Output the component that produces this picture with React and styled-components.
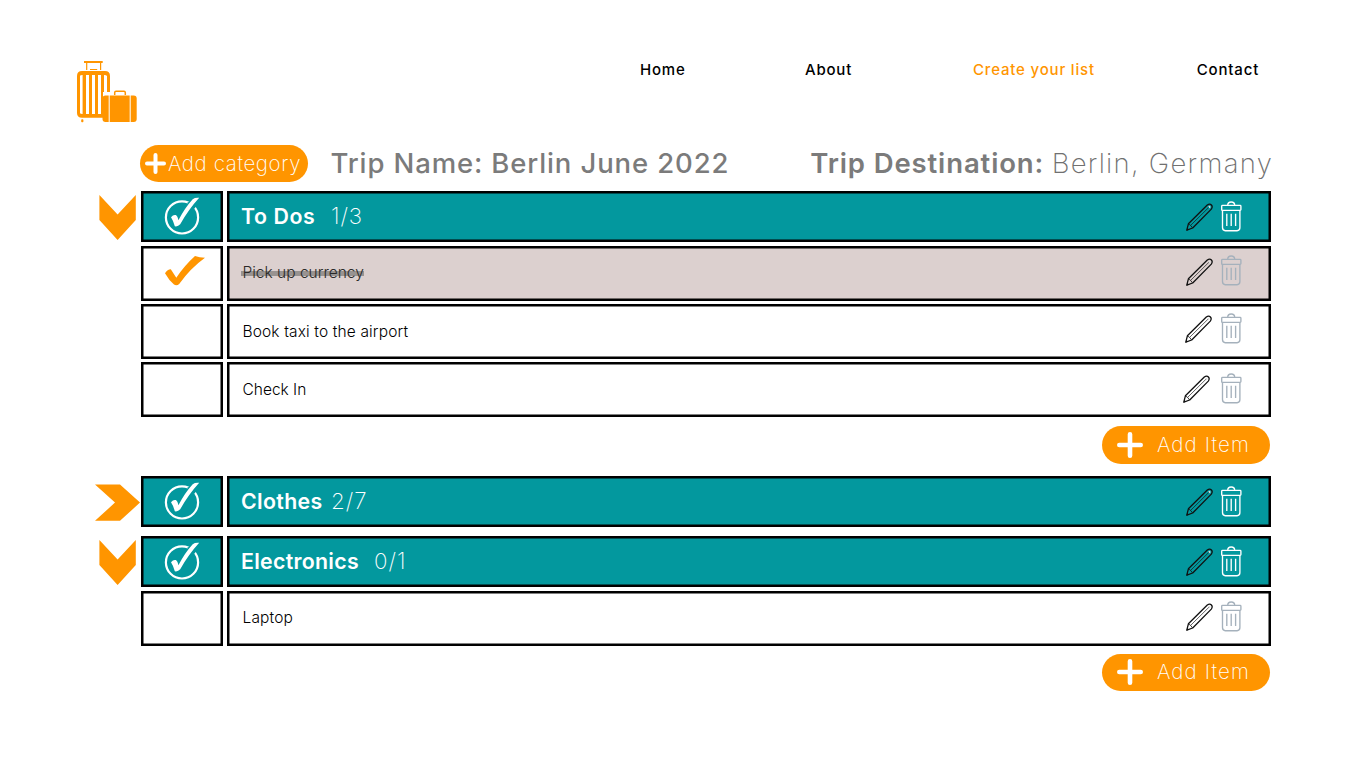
import React from 'react';
import styled, { createGlobalStyle } from 'styled-components';

const ORANGE = '#ff9500';
const TEAL = '#03989e';

const GlobalStyle = createGlobalStyle`
  * { box-sizing: border-box; }
  body { margin: 0; background: #fff; font-family: Inter, "Liberation Sans", sans-serif; }
`;

const Page = styled.div`
  width: 1366px;
  height: 768px;
  overflow: hidden;
  background: #fff;
`;

const Header = styled.header`
  display: flex;
  align-items: flex-start;
  height: 145px;
  padding: 60px 0 0 76px;
`;

const Nav = styled.nav`
  display: flex;
  margin-left: 502px;
`;

const NavLink = styled.a`
  width: ${p => p.$w}px;
  font-size: 15px;
  line-height: 20px;
  font-weight: 500;
  letter-spacing: ${p => p.$ls}px;
  white-space: nowrap;
  color: ${p => (p.$active ? ORANGE : '#000')};
`;

const TitleBar = styled.div`
  display: flex;
  align-items: center;
  height: 37px;
  margin-left: 139.5px;
`;

const Pill = styled.button`
  display: flex;
  align-items: center;
  gap: ${p => p.$gap}px;
  width: 168.5px;
  height: 37.4px;
  padding: 0 0 0 ${p => p.$pad}px;
  border: 0;
  border-radius: 19px;
  background: ${ORANGE};
  color: #fff;
  font-family: inherit;
  font-size: 20.5px;
  line-height: 36px;
  font-weight: 250;
  letter-spacing: ${p => p.$ls}px;
  white-space: nowrap;
`;

const TripText = styled.div`
  width: ${p => p.$w}px;
  margin-left: ${p => p.$ml}px;
  font-size: 27.5px;
  line-height: 37px;
  font-weight: ${p => p.$weight};
  letter-spacing: ${p => p.$ls}px;
  white-space: nowrap;
  color: ${p => (p.$weight < 300 ? '#707070' : '#7b7b7b')};
`;

const Category = styled.section`
  margin-top: ${p => p.$mt}px;
`;

const Row = styled.div`
  display: flex;
  gap: 3.5px;
  height: ${p => p.$h}px;
  margin-top: ${p => p.$mt}px;
`;

const Toggle = styled.div`
  display: flex;
  justify-content: flex-end;
  width: 140.5px;
  margin-right: -3.5px;
  padding: ${p => (p.$open ? '4px 4.5px 0 0' : '8px 1px 0 0')};
`;

const Box = styled.div`
  display: flex;
  align-items: center;
  background: ${p => p.$bg};
  box-shadow: inset 0 0 0 2.5px #000;
`;

const CheckCell = styled(Box)`
  justify-content: center;
  width: 82.5px;
  padding-bottom: ${p => p.$lift}px;
`;

const Body = styled(Box)`
  width: 1044.5px;
  padding-left: 14.5px;
`;

const CategoryName = styled.span`
  width: ${p => p.$w}px;
  padding-bottom: 1.6px;
  color: #fff;
  font-size: 21.3px;
  line-height: 30px;
  font-weight: 600;
  letter-spacing: ${p => p.$ls}px;
  white-space: nowrap;
`;

const Count = styled.span`
  padding-bottom: 1.6px;
  color: #fff;
  font-size: 22.3px;
  line-height: 30px;
  font-weight: 250;
  letter-spacing: ${p => p.$ls}px;
`;

const ItemName = styled.span`
  padding-left: 1.5px;
  padding-top: ${p => p.$drop || 0}px;
  color: ${p => (p.$done ? '#2a2928' : '#000')};
  font-size: 15.5px;
  line-height: 20px;
  font-weight: 300;
  letter-spacing: ${p => p.$ls}px;
  white-space: nowrap;
  ${p => p.$done && `
    background: linear-gradient(#989391, #989391) 0 8px / 100% 5px no-repeat;
  `}
`;

const Actions = styled.span`
  display: flex;
  align-items: center;
  gap: ${p => 7 + p.$shift}px;
  margin-left: auto;
  padding: 0 29.5px ${p => p.$lift}px 0;
`;

const AddRow = styled.div`
  display: flex;
  padding-left: 1101.5px;
  margin-top: ${p => p.$mt}px;
`;

const Logo = () => (
  <svg width="62" height="64" viewBox="76 60 62 64" fill={ORANGE}>
    <rect x="84" y="61" width="18.7" height="2" />
    <path d="M86.7 63v7M100.6 63v7" stroke={ORANGE} strokeWidth="1.2" />
    <rect x="90" y="69" width="7.2" height="1" />
    <path fillRule="evenodd" d="M82 71H105Q110 71 110 76V92H103V117.8H82Q77 117.8 77 113V76Q77 71 82 71ZM80 76V113Q80 114 82.6 114V75Q80 75 80 76ZM86 75V114H89V75ZM92 75V114H95V75ZM98 75V114H101V75ZM104 75V92H107V76Q106.5 75 104 75Z" />
    <rect x="81.2" y="119.2" width="2.2" height="3" rx=".8" />
    <path d="M114.7 95V92.7Q114.7 91.3 116 91.3H124Q125.3 91.3 125.3 92.7V95" fill="none" stroke={ORANGE} strokeWidth="1.5" />
    <rect x="102.5" y="95.4" width="34.2" height="26.7" rx="3" />
    <path d="M109.2 95V123M130.2 95V123" stroke="#fff" strokeWidth="1" />
  </svg>
);

const Plus = ({ size, thick }) => (
  <svg width={size} height={size} viewBox={`0 0 ${size} ${size}`}>
    <path
      d={`M${size / 2} ${thick / 2}V${size - thick / 2}M${thick / 2} ${size / 2}H${size - thick / 2}`}
      stroke="#fff" strokeWidth={thick} strokeLinecap="round"
    />
  </svg>
);

const Chevron = ({ open }) => open ? (
  <svg width="37" height="45" viewBox="0 0 37 45">
    <path d="M.4 0L18.6 19.5L36.8 0V25L18.6 45L.4 25Z" fill={ORANGE} />
  </svg>
) : (
  <svg width="45" height="37" viewBox="0 0 45 37">
    <path d="M0 .4H25L45 18.6L25 36.8H0L20 18.6Z" fill={ORANGE} />
  </svg>
);

const CircleCheck = () => (
  <svg width="36" height="38" viewBox="0 0 36 38">
    <circle cx="18" cy="20.4" r="16.1" fill="none" stroke="#fff" strokeWidth="2.2" />
    <path d="M23 6L31 1L36 5L30 12Z" fill={TEAL} />
    <path d="M7 20.3Q9.5 17.2 11.8 18.1Q13.6 19 14.4 23.3Q20.5 11.2 28.7 2.2Q31 0.4 35.2 0.8Q24.5 12.5 16.2 27.3Q13.8 30 10.8 29.3Q9.2 23.5 7 20.3Z" fill="#fff" />
  </svg>
);

const TickIcon = styled.svg`
  margin-left: 6px;
`;

const Tick = () => (
  <TickIcon width="40" height="30" viewBox="0 0 40 30">
    <path d="M0 17.2Q2.5 13.3 5.8 13.2L11.3 21.7Q19.5 9.5 30 0Q34.5 1.7 40 1.8Q25.5 12.2 14.2 28Q11.7 30 9 28.6Q3.8 24 0 17.2Z" fill={ORANGE} />
  </TickIcon>
);

const PencilIcon = styled.svg`
  position: relative;
  top: ${p => p.$dy}px;
`;

const Pencil = ({ tone, dy = 0 }) => (
  <PencilIcon $dy={dy} width="27" height="28" viewBox="0 0 27 28">
    <path d="M.8 27.2L2.4 20.8L21.3 2Q23.8 .3 25.4 2Q27 3.8 25.3 6.1L6.7 25Z" fill={tone} stroke="#111" strokeWidth="1.3" strokeLinejoin="round" />
    <path d="M2.4 20.8L4.6 22.4L6.7 25" fill="none" stroke="#111" strokeWidth=".8" />
    <path d="M4.6 22.4L23.3 3.9" fill="none" stroke="#111" strokeOpacity=".65" strokeWidth="1" />
    <path d="M.6 27.4L1.2 24.9L3.1 26.7Z" fill="#111" />
    <path d="M22.8 3.2L24.2 4.6" stroke="#ddd" strokeWidth="1.6" />
  </PencilIcon>
);

const Trash = ({ color }) => (
  <svg width="21" height="31" viewBox="0.3 0 21 31" fill="none" stroke={color} strokeWidth="1.35">
    <path d="M7 4.4Q7 1 10.5 1T14 4.4" />
    <rect x="1" y="4.4" width="19.2" height="5" rx=".8" />
    <path d="M1.8 9.4V26.6Q1.8 29.7 4.6 29.7H16.4Q19.2 29.7 19.2 26.6V9.4M6.1 12.8V25M10.5 12.8V25M14.9 12.8V25" />
  </svg>
);

const CategoryRow = ({ open, name, w, ls, count, countLs }) => (
  <Row $h={51.2} $mt={0}>
    <Toggle $open={open}><Chevron open={open} /></Toggle>
    <CheckCell $bg={TEAL} $lift={1.2}><CircleCheck /></CheckCell>
    <Body $bg={TEAL}>
      <CategoryName $w={w} $ls={ls}>{name}</CategoryName>
      <Count $ls={countLs}>{count}</Count>
      <Actions $shift={0.5} $lift={0}><Pencil tone={TEAL} dy={0.5} /><Trash color="#fff" /></Actions>
    </Body>
  </Row>
);

const ItemRow = ({ done, name, ls, mt = 3.4, shift = 0.5, lift = 4, dy = 0.5, drop }) => (
  <Row $h={55} $mt={mt}>
    <Toggle />
    <CheckCell $bg="#fff" $lift={4}>{done && <Tick />}</CheckCell>
    <Body $bg={done ? '#dcd0cf' : '#fff'}>
      <ItemName $done={done} $ls={ls} $drop={drop}>{name}</ItemName>
      <Actions $shift={shift} $lift={lift}>
        <Pencil tone={done ? '#dcd0cf' : '#fff'} dy={dy} />
        <Trash color="#a5b1bc" />
      </Actions>
    </Body>
  </Row>
);

const AddItem = ({ mt }) => (
  <AddRow $mt={mt}>
    <Pill $gap={14} $pad={15.5} $ls={1.12}><Plus size={26} thick={4.6} />Add Item</Pill>
  </AddRow>
);

export default function App() {
  return (
    <Page>
      <GlobalStyle />
      <Header>
        <Logo />
        <Nav>
          <NavLink $w={165} $ls={0.78}>Home</NavLink>
          <NavLink $w={168} $ls={0.8}>About</NavLink>
          <NavLink $w={223.7} $ls={0.82} $active>Create your list</NavLink>
          <NavLink $w={70} $ls={0.84}>Contact</NavLink>
        </Nav>
      </Header>
      <TitleBar>
        <Pill $gap={2} $pad={5.5} $ls={0.62}><Plus size={21} thick={4} />Add category</Pill>
        <TripText $ml={22.5} $w={479.7} $weight={550} $ls={0.87}>Trip Name: Berlin June 2022</TripText>
        <TripText $ml={0} $w={241.5} $weight={600} $ls={0.88}>Trip Destination:</TripText>
        <TripText $ml={0} $w={220} $weight={250} $ls={1.28}>Berlin, Germany</TripText>
      </TitleBar>
      <Category $mt={9}>
        <CategoryRow open name="To Dos" w={90} ls={0.6} count="1/3" countLs={0.9} />
        <ItemRow done name="Pick up currency" ls={0} lift={4.5} dy={1} />
        <ItemRow name="Book taxi to the airport" ls={0.14} shift={1.5} lift={5} drop={1.5} />
        <ItemRow name="Check In" ls={0} shift={4} lift={2} />
        <AddItem mt={9} />
      </Category>
      <Category $mt={12.4}>
        <CategoryRow name="Clothes" w={90} ls={0.35} count="2/7" countLs={1} />
      </Category>
      <Category $mt={8.9}>
        <CategoryRow open name="Electronics" w={133} ls={0.3} count="0/1" countLs={1} />
        <ItemRow name="Laptop" ls={0.15} lift={3.6} />
        <AddItem mt={8} />
      </Category>
    </Page>
  );
}
